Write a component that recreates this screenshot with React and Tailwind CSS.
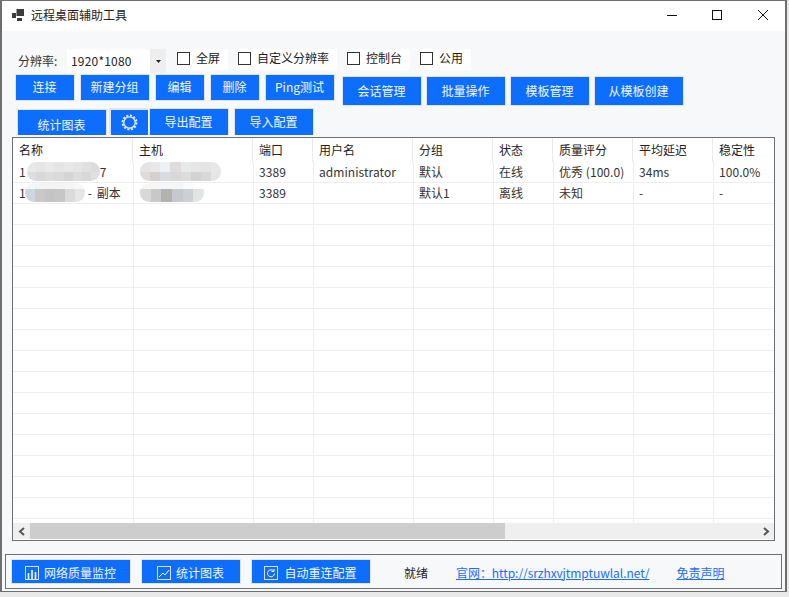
const FONT = "font-['Noto_Sans_CJK_SC','Noto_Sans',sans-serif]";

function Btn({ w, h, className = "", pad = "pb-[1px] pr-[1px]", children }) {
  return (
    <button className={`flex shrink-0 items-center justify-center border border-[#dfe4ee] bg-[#0d6efd] text-xs leading-none text-[#f2f6ff] ${pad} ${w} ${h} ${className}`}>
      {children}
    </button>
  );
}

function Check({ w, label }) {
  return (
    <label className={`flex h-[21px] items-center gap-[6px] bg-white pb-[3px] text-xs leading-none text-[#222] ${w}`}>
      <span className="h-[13px] w-[13px] shrink-0 border border-[#333] bg-white" />
      {label}
    </label>
  );
}

function Mosaic({ className, rows }) {
  return (
    <div className={`absolute flex flex-col overflow-hidden rounded-[9px] blur-[0.6px] ${className}`}>
      {rows.map((row, i) => (
        <div key={i} className="flex flex-1">
          {row.map((c, j) => (
            <div key={j} className={`flex-1 ${c}`} />
          ))}
        </div>
      ))}
    </div>
  );
}

const HEAD_COLS = "grid-cols-[120px_120px_60px_100px_80px_60px_80px_80px_80px]";
const BODY_COLS = "grid-cols-[121px_120px_60px_100px_80px_60px_80px_80px_80px]";
const HEAD = ["名称", "主机", "端口", "用户名", "分组", "状态", "质量评分", "平均延迟", "稳定性"];
const ROWS = [
  ["1", "", "3389", "administrator", "默认", "在线", "优秀 (100.0)", "34ms", "100.0%"],
  ["1", "", "3389", "", "默认1", "离线", "未知", "-", "-"],
  ...Array.from({ length: 16 }, () => ["", "", "", "", "", "", "", "", ""]),
];

function Row({ cells, index }) {
  return (
    <div className={`grid h-[21px] w-[781px] ${BODY_COLS}`}>
      {cells.map((c, i) => (
        <div key={i} className={`relative flex h-[21px] items-center whitespace-pre border-b border-r border-[#eeeeee] text-xs leading-none tracking-[0.05px] text-[#333] ${i === 0 ? "pl-[6px]" : "pl-[5px]"}`}>
          {c}
          {i === 0 && index === 0 && <span className="relative z-10 ml-[74px]">7</span>}
          {i === 0 && index === 1 && <span className="relative z-10 ml-[62px] [word-spacing:2px]">- 副本</span>}
        </div>
      ))}
    </div>
  );
}

export default function App() {
  return (
    <div className={`h-[597px] w-[789px] overflow-hidden bg-[#e9e9e9] ${FONT}`}>
      <div className="flex h-[592px] w-[787px] flex-col border-x-2 border-y border-[#6f6f6f] bg-[#f7f8fa]">
        {/* title bar */}
        <div className="flex h-[30px] shrink-0 items-center bg-white pb-[2px] pl-[10px] text-xs text-[#222]">
          <svg width="12" height="12" viewBox="0 0 12 12" className="mr-[7px]" fill="#3c3c3c">
            <rect x="0" y="4" width="4" height="5" />
            <rect x="4.5" y="0" width="7.5" height="7" />
            <rect x="5" y="9" width="5" height="3" />
          </svg>
          远程桌面辅助工具
          <div className="ml-auto flex items-center">
            <svg width="12" height="12" viewBox="0 0 12 12" className="mr-[33px]" stroke="#111" fill="none">
              <path d="M1 6.5h10" />
            </svg>
            <svg width="12" height="12" viewBox="0 0 12 12" className="mr-[34px]" stroke="#111" fill="none">
              <rect x="1.5" y="1.5" width="9" height="9" />
            </svg>
            <svg width="12" height="12" viewBox="0 0 12 12" className="mr-[16px]" stroke="#111" fill="none">
              <path d="M1 1l10 10M11 1L1 11" />
            </svg>
          </div>
        </div>

        {/* options */}
        <div className="mt-[18px] flex h-[24px] shrink-0 items-start pl-[16px]">
          <span className="mt-[5px] w-[49px] text-xs leading-[14px] text-[#333]">分辨率:</span>
          <div className="flex h-[24px] w-[99px] bg-white">
            <span className="pl-[4px] pt-[5px] text-xs leading-[14px] tracking-[0.2px] text-[#222]">1920*1080</span>
            <span className="ml-auto flex w-[16px] items-center justify-center bg-[#eeeeee]">
              <svg width="5" height="3" viewBox="0 0 5 3" fill="#222"><path d="M0 0h5L2.5 3z" /></svg>
            </span>
          </div>
          <div className="ml-[11px] flex gap-[10px]">
            <Check w="w-[51px]" label="全屏" />
            <Check w="w-[99px]" label="自定义分辨率" />
            <Check w="w-[63px]" label="控制台" />
            <Check w="w-[51px]" label="公用" />
          </div>
        </div>

        {/* buttons row 1 */}
        <div className="mt-[1px] flex h-[32px] shrink-0 items-start pl-[13px]">
          <Btn w="w-[60px]" h="h-[27px]">连接</Btn>
          <Btn w="w-[70px]" h="h-[27px]" className="ml-[5px]">新建分组</Btn>
          <Btn w="w-[50px]" h="h-[27px]" className="ml-[5px]">编辑</Btn>
          <Btn w="w-[50px]" h="h-[27px]" className="ml-[5px]">删除</Btn>
          <Btn w="w-[70px]" h="h-[27px]" className="ml-[5px]">Ping测试</Btn>
          <Btn w="w-[80px]" h="h-[30px]" className="ml-[7px] mt-[2px]">会话管理</Btn>
          <Btn w="w-[80px]" h="h-[30px]" className="ml-[4px] mt-[2px]">批量操作</Btn>
          <Btn w="w-[80px]" h="h-[30px]" className="ml-[4px] mt-[2px]">模板管理</Btn>
          <Btn w="w-[90px]" h="h-[30px]" className="ml-[4px] mt-[2px]">从模板创建</Btn>
        </div>

        {/* buttons row 2 */}
        <div className="mt-[2px] flex h-[29px] shrink-0 items-start pl-[15px]">
          <Btn w="w-[90px]" h="h-[26px]" className="mt-[1px] border-b-0 pt-[6px]">统计图表</Btn>
          <Btn w="w-[39px]" h="h-[27px]" className="ml-[2px] border-[2px] border-b-0 border-r-0 border-[#dfe4ee]">
            <svg width="17" height="17" viewBox="0 0 18 18" fill="none" stroke="#e8ecff">
              <circle cx="9" cy="9" r="6" strokeWidth="1.3" />
              <circle cx="9" cy="9" r="7.4" strokeWidth="2" strokeDasharray="2.2 1.7" />
            </svg>
          </Btn>
          <Btn w="w-[80px]" h="h-[27px]" className="ml-[1px] border-b-0">导出配置</Btn>
          <Btn w="w-[80px]" h="h-[27px]" className="ml-[5px] border-b-0">导入配置</Btn>
        </div>

        {/* table */}
        <div className="ml-[10px] flex h-[404px] w-[763px] shrink-0 flex-col overflow-hidden border border-[#6f6f6f] bg-white">
          <div className="relative h-[385px] overflow-hidden">
            <div className={`grid h-[24px] w-[780px] ${HEAD_COLS}`}>
              {HEAD.map((h) => (
                <div key={h} className="flex items-center border-r border-[#e9e9e9] pl-[6px] text-xs leading-none text-[#222]">
                  {h}
                </div>
              ))}
            </div>
            {ROWS.map((r, i) => (
              <Row key={i} cells={r} index={i} />
            ))}
            <Mosaic
              className="left-[14px] top-[24px] h-[19px] w-[73px]"
              rows={[
                ["bg-[#e9e9e9]", "bg-[#e5e5e5]", "bg-[#e8e9e9]", "bg-[#e4e4e4]", "bg-[#e8e8e8]", "bg-[#e5e5e5]", "bg-[#e0e0e0]", "bg-[#dcdcdc]"],
                ["bg-[#dadde1]", "bg-[#d8d8d8]", "bg-[#dcdcdc]", "bg-[#d9d9d9]", "bg-[#d4d4d4]", "bg-[#dcdcdc]", "bg-[#d8d8d8]", "bg-[#e0e0e0]"],
              ]}
            />
            <Mosaic
              className="left-[127px] top-[24px] h-[19px] w-[81px]"
              rows={[
                ["bg-[#e4e2e2]", "bg-[#e8e8e8]", "bg-[#eef1f4]", "bg-[#dedcdc]", "bg-[#e8eaea]", "bg-[#e6e6e6]", "bg-[#e4e4e4]", "bg-[#e8e8e8]"],
                ["bg-[#dcdcdc]", "bg-[#d4d0ce]", "bg-[#d8dce0]", "bg-[#d8d8d8]", "bg-[#dcdcdc]", "bg-[#d2d2d2]", "bg-[#d8d8d8]", "bg-[#e6e6e6]"],
              ]}
            />
            <Mosaic
              className="left-[12px] top-[45px] h-[19px] w-[60px]"
              rows={[
                ["bg-[#f4f6f8]", "bg-[#f4f4f4]", "bg-[#f4f4f4]", "bg-[#f4f4f4]", "bg-[#f6f6f6]", "bg-[#f8f8f8]"],
                ["bg-[#cfd6dc]", "bg-[#c8c8c8]", "bg-[#c4c4c4]", "bg-[#c6c6c6]", "bg-[#dadada]", "bg-[#e6e6e6]"],
                ["bg-[#cfd6dc]", "bg-[#c8c8c8]", "bg-[#c4c4c4]", "bg-[#c6c6c6]", "bg-[#dadada]", "bg-[#e6e6e6]"],
              ]}
            />
            <Mosaic
              className="left-[127px] top-[45px] h-[19px] w-[64px] rounded-[4px]"
              rows={[
                ["bg-[#f6f6f6]", "bg-[#f6f6f6]", "bg-[#f4f6f8]", "bg-[#f4f6f8]", "bg-[#fafafa]", "bg-white"],
                ["bg-[#d8d8d8]", "bg-[#c8c8c8]", "bg-[#b4b2b0]", "bg-[#c6c8cc]", "bg-[#ccd0d4]", "bg-[#e2e4e4]"],
                ["bg-[#d8d8d8]", "bg-[#c8c8c8]", "bg-[#b4b2b0]", "bg-[#c6c8cc]", "bg-[#ccd0d4]", "bg-[#e2e4e4]"],
              ]}
            />
          </div>
          {/* scrollbar */}
          <div className="flex h-[16px] shrink-0 items-center bg-[#efefef]">
            <span className="flex w-[17px] items-center justify-center">
              <svg width="8" height="9" viewBox="0 0 8 9" fill="none" stroke="#555" strokeWidth="2"><path d="M6 1L2 4.5 6 8" /></svg>
            </span>
            <div className="h-[16px] w-[475px] bg-[#cdcdcd]" />
            <span className="ml-auto flex w-[17px] items-center justify-center">
              <svg width="8" height="9" viewBox="0 0 8 9" fill="none" stroke="#555" strokeWidth="2"><path d="M2 1l4 3.5L2 8" /></svg>
            </span>
          </div>
        </div>

        {/* status group */}
        <div className="ml-[3px] mt-[13px] flex h-[35px] w-[777px] shrink-0 items-center border border-[#6f6f6f] pl-[5px]">
          <Btn w="w-[120px]" h="h-[25px]" pad="pt-[2px] pr-[1px]" className="gap-[5px]">
            <svg width="14" height="14" viewBox="0 0 14 14" fill="none" stroke="#dbe2ff">
              <rect x="0.5" y="0.5" width="13" height="13" />
              <path d="M3.5 13V7M7 13V4M10.5 13V6" strokeWidth="1.6" stroke="#fff" />
            </svg>
            网络质量监控
          </Btn>
          <Btn w="w-[100px]" h="h-[25px]" pad="pt-[2px] pr-[1px]" className="ml-[10px] gap-[5px]">
            <svg width="14" height="14" viewBox="0 0 14 14" fill="none" stroke="#dbe2ff">
              <rect x="0.5" y="0.5" width="13" height="13" />
              <path d="M2 11l4-4 2 2 4-5" stroke="#fff" />
            </svg>
            统计图表
          </Btn>
          <Btn w="w-[120px]" h="h-[25px]" pad="pt-[2px] pr-[1px]" className="ml-[10px] gap-[6px]">
            <svg width="14" height="14" viewBox="0 0 14 14" fill="none" stroke="#dbe2ff">
              <rect x="0.5" y="0.5" width="13" height="13" />
              <path d="M9.8 5.2A3.5 3.5 0 1 0 10.5 7.5M10 3v2.5H7.5" stroke="#fff" />
            </svg>
            自动重连配置
          </Btn>
          <span className="ml-[33px] pt-[2px] text-xs leading-none text-[#222]">就绪</span>
          <a className="ml-[28px] mt-[2px] text-xs leading-none tracking-[-0.06px] text-[#1a6cff] underline">{"官网\uFF1Ahttp://srzhxvjtmptuwlal.net/"}</a>
          <a className="ml-[27px] mt-[2px] text-xs leading-none text-[#1a6cff] underline">免责声明</a>
        </div>
      </div>
    </div>
  );
}
